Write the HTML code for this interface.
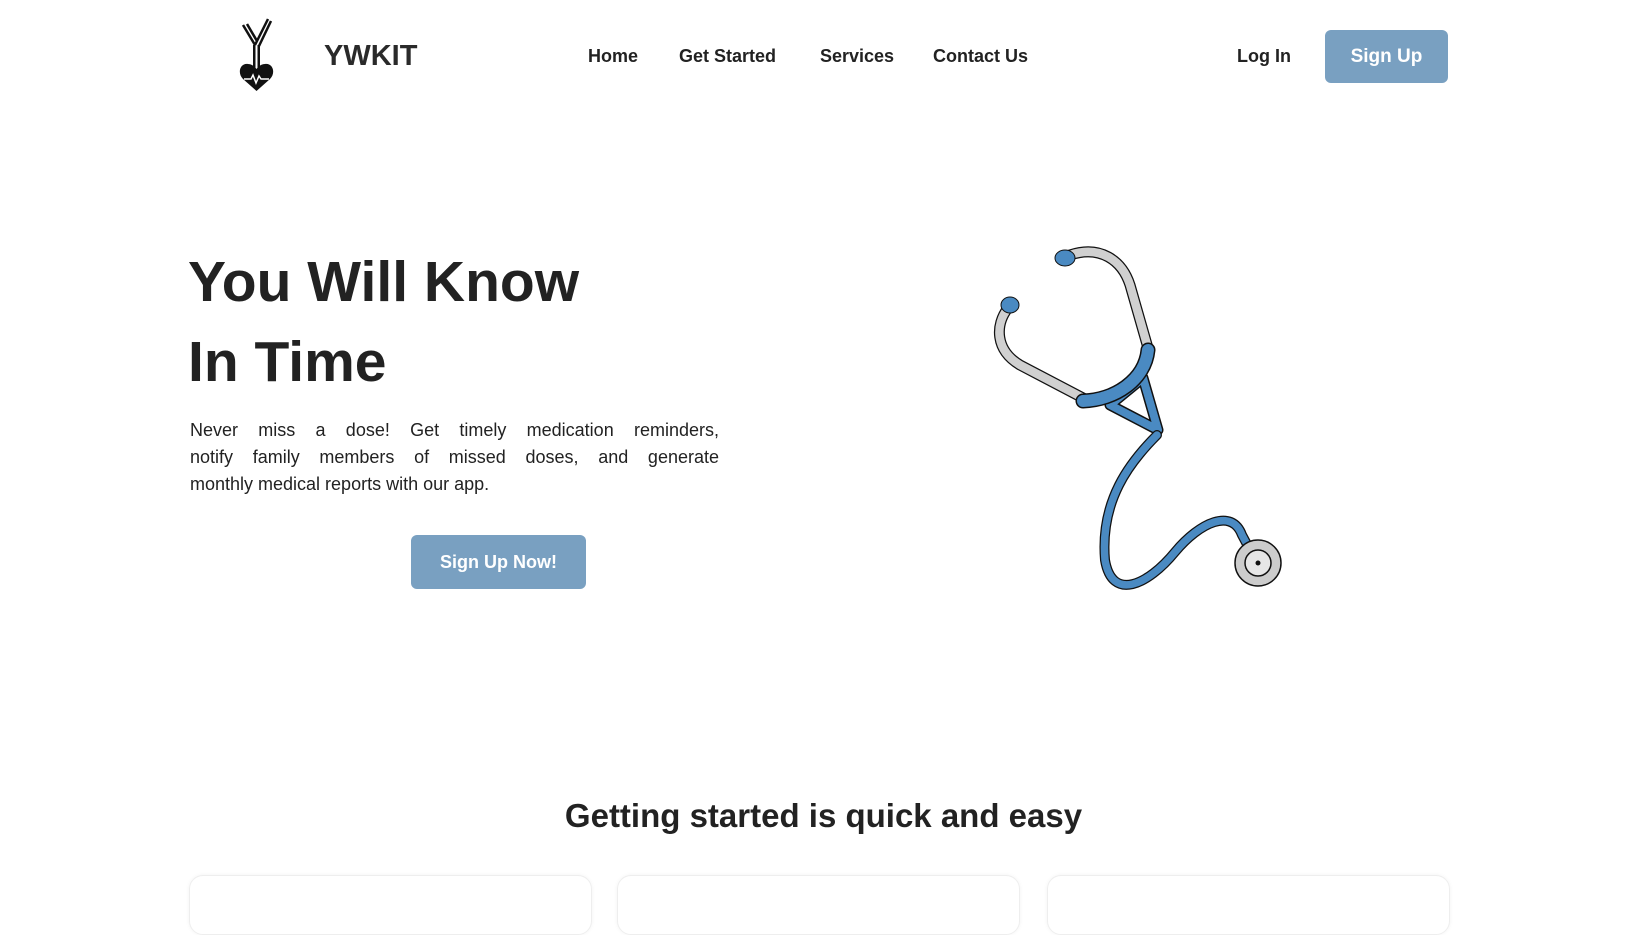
<!DOCTYPE html>
<html><head><style>
*{margin:0;padding:0;box-sizing:border-box}
body{width:1647px;height:888px;overflow:hidden;background:#fff;font-family:"Liberation Sans",sans-serif;color:#222;position:relative}
.a{position:absolute}
.nav{font-size:18px;font-weight:bold;color:#222;top:46px}
.btn{background:#79a0c1;color:#fff;font-weight:bold;border-radius:6px;display:flex;align-items:center;justify-content:center}
.card{top:875px;height:60px;border:1px solid #eee;border-radius:14px;width:403px;box-shadow:0 0 4px rgba(0,0,0,.05)}
.p span{display:block;text-align:justify;text-align-last:justify}
</style></head><body>
<svg class="a" style="left:238px;top:15px" width="44" height="76" viewBox="0 0 44 76">
<path d="M5 10 L17 30 M9 9 L19 26 M17 30 L30 4 M21 31 L33 6" stroke="#111" stroke-width="2.5" fill="none"/>
<rect x="15" y="30" width="2.5" height="30" fill="#111"/><rect x="19.5" y="30" width="2.5" height="30" fill="#111"/>
<path d="M18.5 76 L5 64 C-1 58 2 48 10 49 C14 49 17 52 18.5 54 C20 52 23 49 27 49 C35 48 38 58 32 64 Z" fill="#111"/>
<path d="M6 64 L13 64 L15 60 L18 68 L21 61 L23 64 L31 64" stroke="#fff" stroke-width="1.5" fill="none"/>
</svg>
<div class="a" style="left:324px;top:40px;font-size:29px;font-weight:bold;color:#2a2a2a">YWKIT</div>
<div class="a nav" style="left:588px">Home</div>
<div class="a nav" style="left:679px">Get Started</div>
<div class="a nav" style="left:820px">Services</div>
<div class="a nav" style="left:933px">Contact Us</div>
<div class="a nav" style="left:1237px">Log In</div>
<div class="a btn" style="left:1325px;top:30px;width:123px;height:53px;font-size:19px">Sign Up</div>
<div class="a" style="left:188px;top:242px;font-size:57px;font-weight:bold;line-height:80px;color:#222;letter-spacing:0px">You Will Know<br>In Time</div>
<div class="a p" style="left:190px;top:417px;width:529px;font-size:18px;line-height:27px;color:#222"><span>Never miss a dose! Get timely medication reminders,</span><span>notify family members of missed doses, and generate</span>monthly medical reports with our app.</div>
<div class="a btn" style="left:411px;top:535px;width:175px;height:54px;font-size:18px">Sign Up Now!</div>
<svg class="a" style="left:950px;top:230px" width="380" height="380" viewBox="0 0 380 380">
<g fill="none" stroke-linecap="round">
<path d="M120 25 C150 15 172 30 180 55 L198 118" stroke="#111" stroke-width="11"/>
<path d="M120 25 C150 15 172 30 180 55 L198 118" stroke="#d0d0d0" stroke-width="8.5"/>
<path d="M58 78 C45 95 45 120 70 135 L133 168" stroke="#111" stroke-width="11"/>
<path d="M58 78 C45 95 45 120 70 135 L133 168" stroke="#d0d0d0" stroke-width="8.5"/>
<path d="M160 175 L193 148 L208 200 Z" stroke="#111" stroke-width="11" stroke-linejoin="round"/>
<path d="M160 175 L193 148 L208 200 Z" stroke="#4a8ac2" stroke-width="8" stroke-linejoin="round"/>
<path d="M133 171 C165 170 195 150 198 120" stroke="#111" stroke-width="15"/>
<path d="M133 171 C165 170 195 150 198 120" stroke="#4a8ac2" stroke-width="12"/>
<path d="M207 205 C180 232 150 270 155 330 C162 372 198 355 225 322 C250 292 282 278 292 305 L300 320" stroke="#111" stroke-width="10"/>
<path d="M207 205 C180 232 150 270 155 330 C162 372 198 355 225 322 C250 292 282 278 292 305 L300 320" stroke="#4a8ac2" stroke-width="7.5"/>
</g>
<ellipse cx="115" cy="28" rx="10" ry="8" fill="#4a8ac2" stroke="#111" stroke-width="1"/>
<ellipse cx="60" cy="75" rx="9" ry="8" fill="#4a8ac2" stroke="#111" stroke-width="1"/>
<circle cx="308" cy="333" r="23" fill="#ccc" stroke="#111" stroke-width="1.5"/>
<circle cx="308" cy="333" r="13" fill="#e6e6e6" stroke="#111" stroke-width="1.5"/>
<circle cx="308" cy="333" r="2.5" fill="#111"/>
</svg>
<div class="a" style="left:0;width:1647px;top:797px;text-align:center;font-size:33px;font-weight:bold;color:#222">Getting started is quick and easy</div>
<div class="a card" style="left:189px"></div>
<div class="a card" style="left:617px"></div>
<div class="a card" style="left:1047px"></div>
</body></html>
